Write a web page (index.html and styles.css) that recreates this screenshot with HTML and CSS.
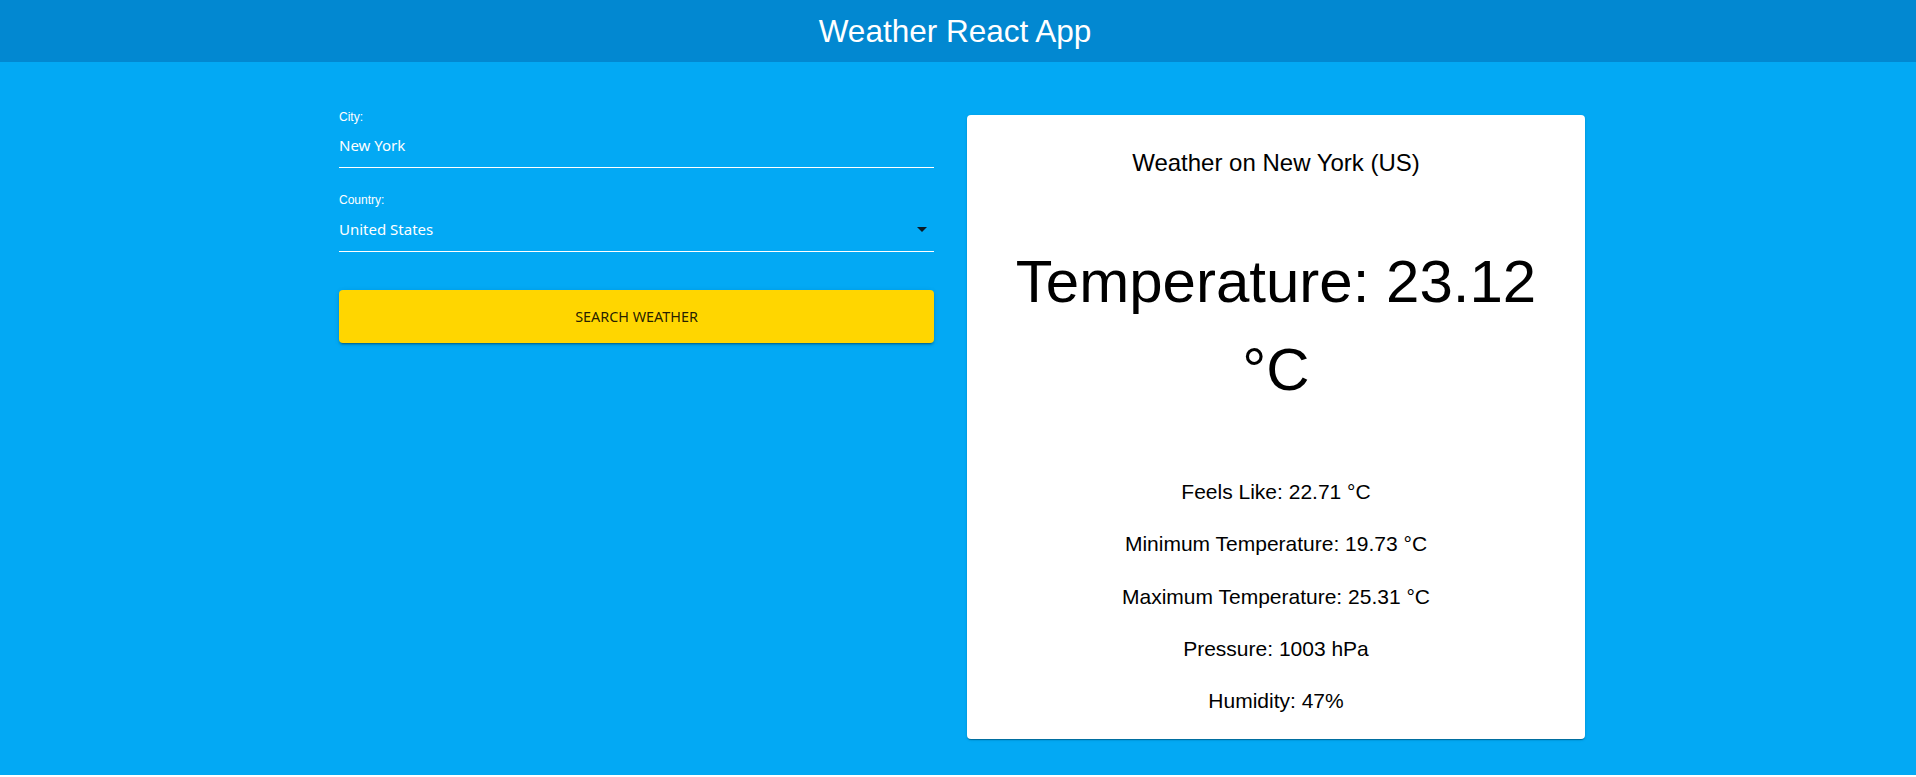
FILE: index.html
```html
<!DOCTYPE html>
<html lang="en">
<head>
<meta charset="utf-8">
<title>Weather React App</title>
<link rel="stylesheet" href="styles.css">
</head>
<body>
<header class="app-bar">
  <h1 class="app-title">Weather React App</h1>
</header>
<main class="main">
  <section class="form-col">
    <form class="form" onsubmit="return false;">
      <div class="field">
        <label class="field-label" for="city">City:</label>
        <input class="field-input" id="city" type="text" value="New York">
      </div>
      <div class="field field-select">
        <span class="field-label">Country:</span>
        <div class="select-box">
          <span class="select-value">United States</span>
          <svg class="select-icon" width="24" height="24" viewBox="0 0 24 24" aria-hidden="true"><path d="M7 10l5 5 5-5z"/></svg>
        </div>
      </div>
      <button class="search-btn" type="submit">SEARCH WEATHER</button>
    </form>
  </section>
  <section class="card">
    <h2 class="card-title">Weather on New York (US)</h2>
    <p class="card-temp">Temperature: 23.12 °C</p>
    <div class="card-details">
      <p class="detail">Feels Like: 22.71 °C</p>
      <p class="detail">Minimum Temperature: 19.73 °C</p>
      <p class="detail">Maximum Temperature: 25.31 °C</p>
      <p class="detail">Pressure: 1003 hPa</p>
      <p class="detail">Humidity: 47%</p>
    </div>
  </section>
</main>
</body>
</html>
```

FILE: styles.css
```css
* { box-sizing: border-box; }

body {
  margin: 0;
  background: #ffffff;
  font-family: "Liberation Sans", Arial, sans-serif;
}

.app-bar {
  height: 62px;
  background: #0288d1;
  display: flex;
  align-items: center;
  justify-content: center;
  padding-right: 6px;
}

.app-title {
  margin: 0;
  font-weight: 400;
  font-size: 31.5px;
  line-height: normal;
  color: #ffffff;
}

.main {
  background: #03a9f4;
  display: grid;
  grid-template-columns: 595px 618px;
  column-gap: 33px;
  justify-content: center;
  align-items: start;
  padding: 47px 0 36px 8px;
}

.form {
  display: flex;
  flex-direction: column;
  margin: 0;
}

.field {
  display: flex;
  flex-direction: column;
}

.field + .field { margin-top: 24px; }

.field-label {
  display: block;
  font-family: "Liberation Sans", Arial, sans-serif;
  font-size: 12px;
  line-height: 16px;
  color: #ffffff;
}

.field-input {
  display: block;
  width: 100%;
  height: 43px;
  margin: 0;
  padding: 10px 0 12px;
  border: none;
  border-bottom: 1px solid #ffffff;
  border-radius: 0;
  background: transparent;
  outline: none;
  font-family: "Noto Sans", "Open Sans", sans-serif;
  font-size: 15px;
  line-height: 20px;
  color: #ffffff;
}

.select-box {
  display: flex;
  align-items: center;
  justify-content: space-between;
  height: 44px;
  padding: 11px 0 12px;
  border-bottom: 1px solid #ffffff;
}

.select-value {
  font-family: "Noto Sans", "Open Sans", sans-serif;
  font-size: 15px;
  line-height: 20px;
  color: #ffffff;
}

.select-icon {
  flex: none;
  fill: #0b1a24;
}

.search-btn {
  margin-top: 38px;
  height: 53px;
  border: none;
  border-radius: 4px;
  background: #ffd600;
  color: rgba(0, 0, 0, 0.87);
  font-family: "Noto Sans", "Open Sans", sans-serif;
  font-size: 14.4px;
  letter-spacing: 0;
  cursor: pointer;
  box-shadow: 0 3px 1px -2px rgba(0,0,0,0.2), 0 2px 2px 0 rgba(0,0,0,0.14), 0 1px 5px 0 rgba(0,0,0,0.12);
}

.card {
  margin-top: 6px;
  background: #ffffff;
  border-radius: 4px;
  padding: 30px 16px 22px;
  text-align: center;
  color: #000000;
  box-shadow: 0 2px 1px -1px rgba(0,0,0,0.2), 0 1px 1px 0 rgba(0,0,0,0.14), 0 1px 3px 0 rgba(0,0,0,0.12);
}

.card-title {
  margin: 0;
  font-weight: 400;
  font-size: 24px;
  line-height: 36px;
}

.card-temp {
  margin: 57px 0 0;
  font-size: 60px;
  line-height: 88px;
}

.card-details {
  margin-top: 62px;
  display: flex;
  flex-direction: column;
  gap: 20.25px;
}

.detail {
  margin: 0;
  font-size: 21px;
  line-height: 32px;
}
```
